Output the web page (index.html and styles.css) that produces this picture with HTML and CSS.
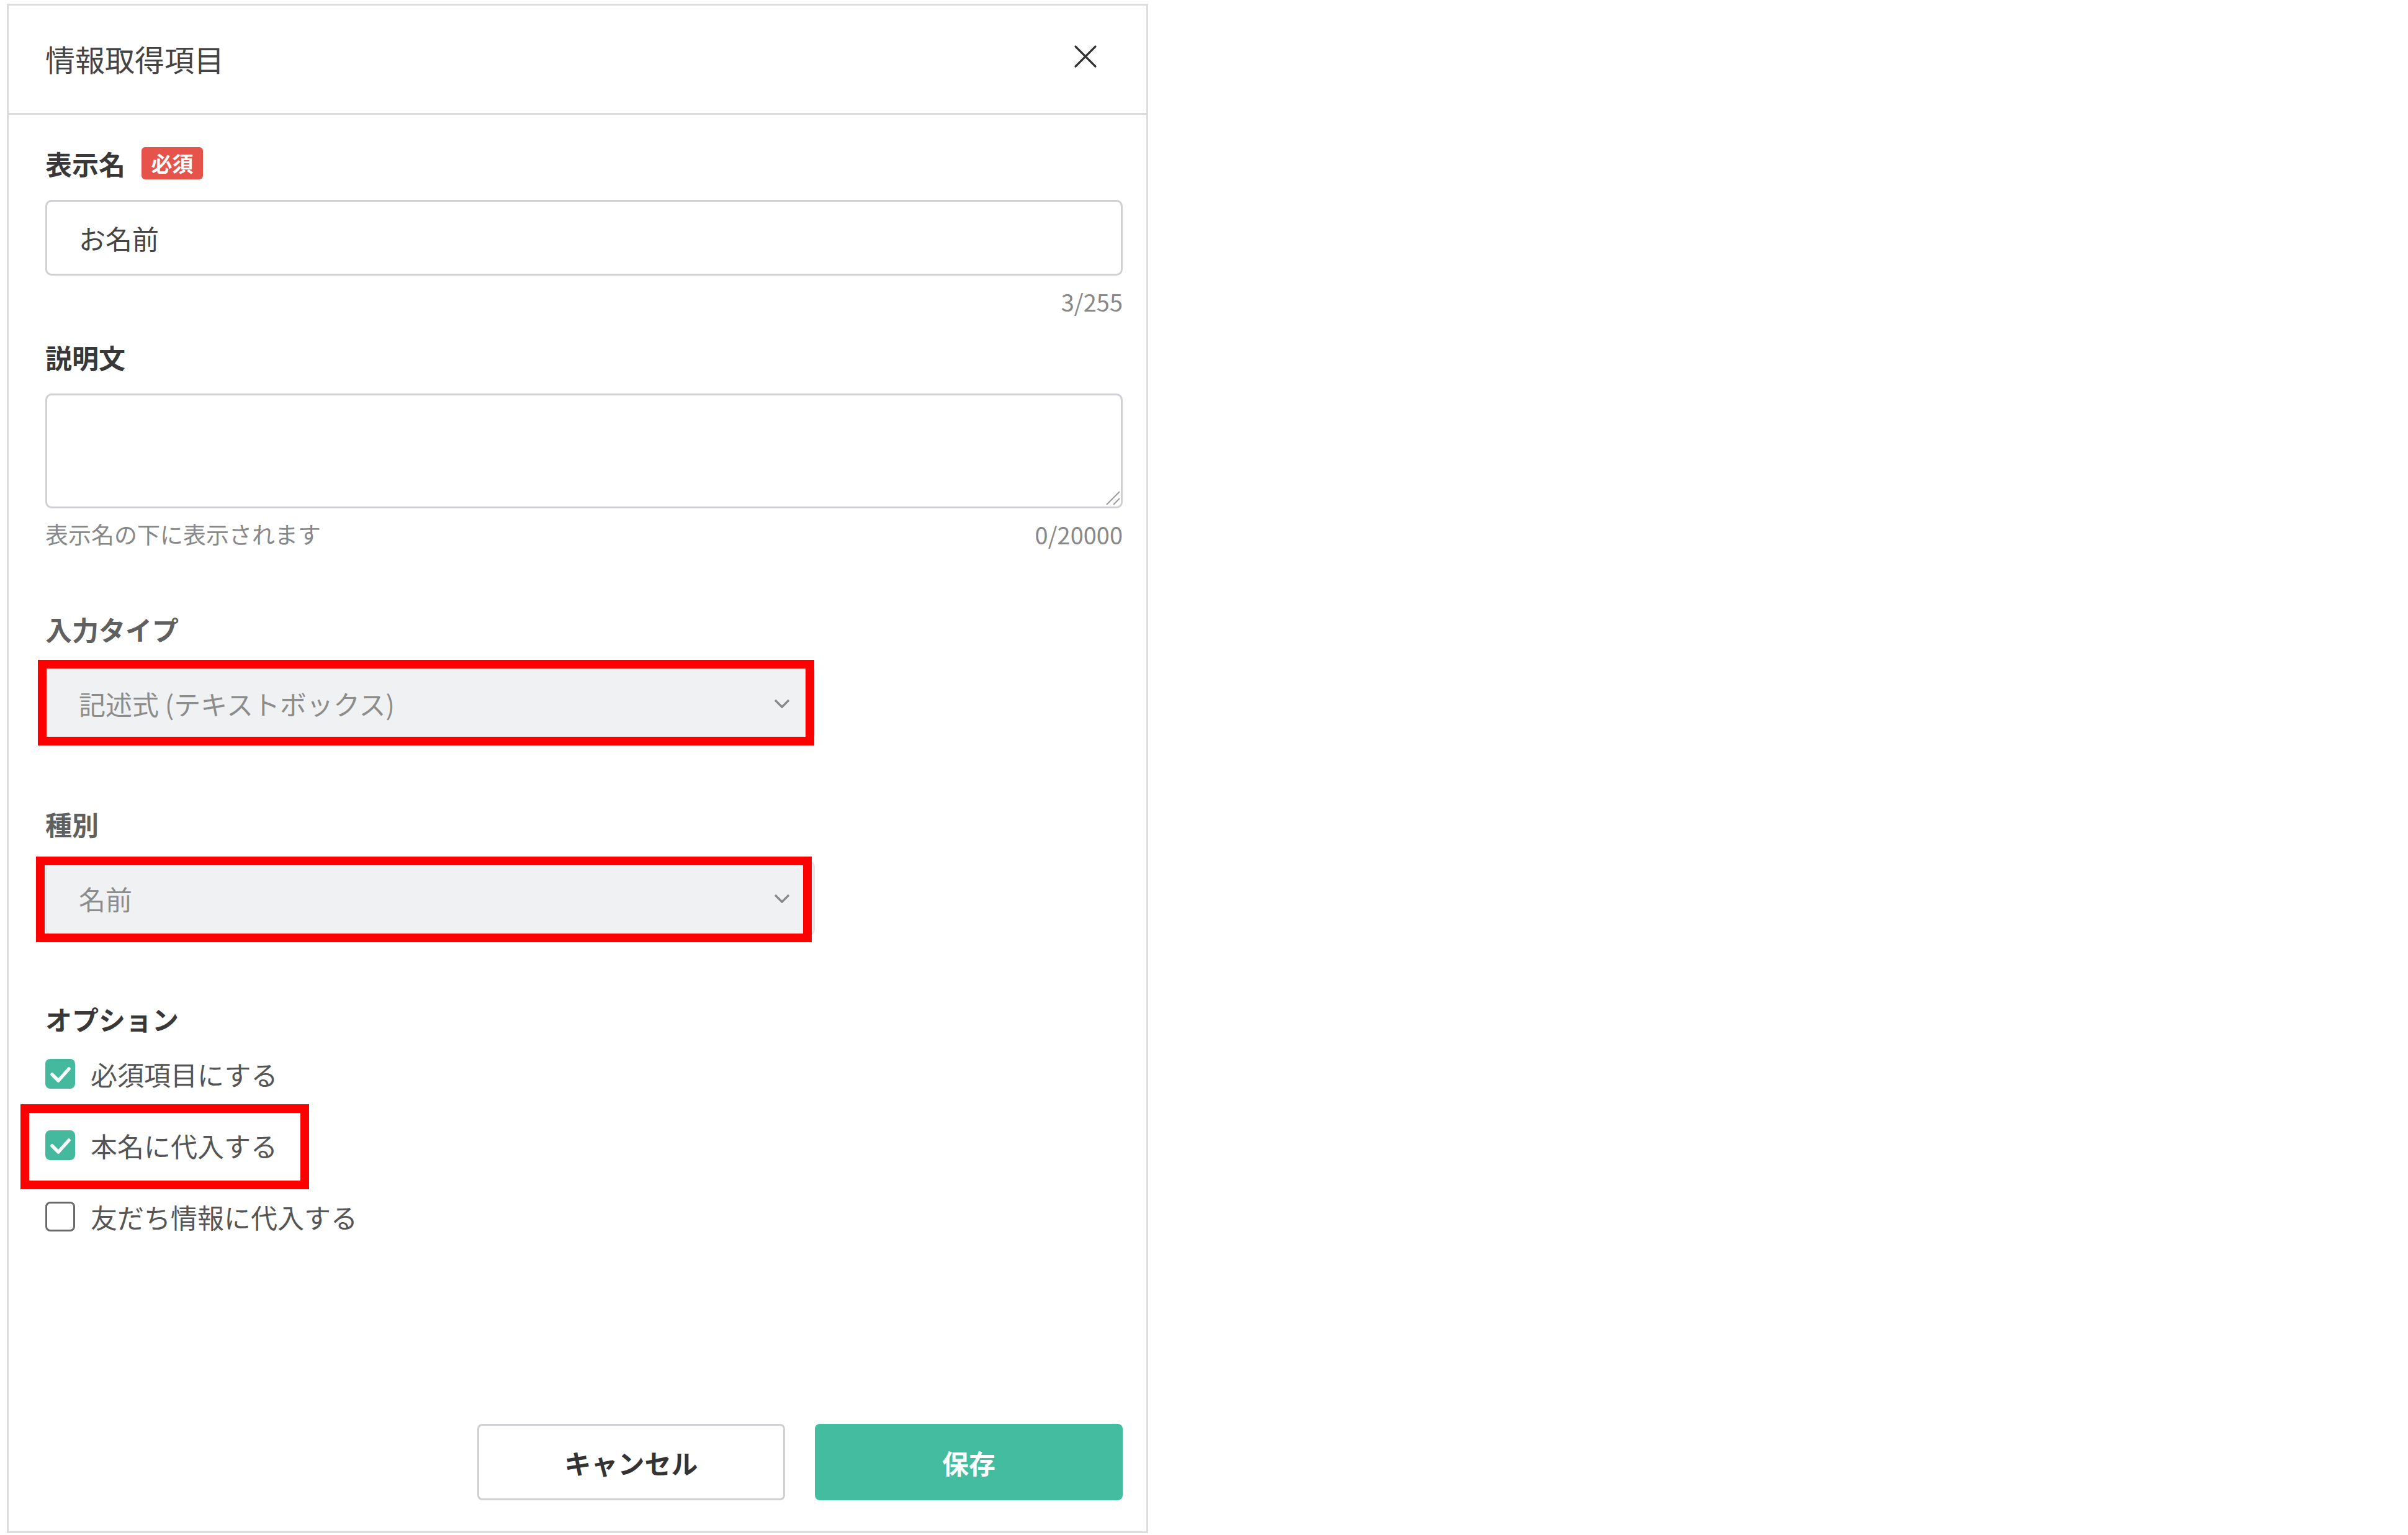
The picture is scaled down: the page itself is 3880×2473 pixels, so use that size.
FILE: index.html
```html
<!DOCTYPE html>
<html lang="ja">
<head>
<meta charset="utf-8">
<title>情報取得項目</title>
<link rel="stylesheet" href="styles.css">
</head>
<body>
<div class="panel">
  <header class="panel-header">
    <h1 class="panel-title">情報取得項目</h1>
    <button class="close-btn" type="button" aria-label="閉じる">
      <svg viewBox="0 0 38 38" width="38" height="38"><path d="M3 3 L35 35 M35 3 L3 35" stroke="#333" stroke-width="3.2" stroke-linecap="round" fill="none"/></svg>
    </button>
  </header>

  <div class="panel-body">
    <section class="field field-first">
      <div class="label-row"><span class="label">表示名</span><span class="badge">必須</span></div>
      <div class="control input">お名前</div>
      <div class="meta-row"><span class="helper"></span><span class="counter">3/255</span></div>
    </section>

    <section class="field field-second">
      <div class="label-row"><span class="label">説明文</span></div>
      <div class="control textarea">
        <svg class="resize-grip" viewBox="0 0 26 26" width="26" height="26"><path d="M3 23 L24 2 M14 23 L24 13" stroke="#9a9a9a" stroke-width="2" fill="none"/></svg>
      </div>
      <div class="meta-row"><span class="helper">表示名の下に表示されます</span><span class="counter">0/20000</span></div>
    </section>

    <section class="field">
      <div class="label-row"><span class="label label-muted">入力タイプ</span></div>
      <div class="control select">
        <span>記述式 (テキストボックス)</span>
        <svg class="chevron" viewBox="0 0 26 15" width="26" height="15"><path d="M2 2 L13 13 L24 2" stroke="#8a8a8a" stroke-width="3.5" fill="none"/></svg>
        <span class="highlight highlight-type"></span>
      </div>
    </section>

    <section class="field">
      <div class="label-row"><span class="label label-muted">種別</span></div>
      <div class="control select">
        <span>名前</span>
        <svg class="chevron" viewBox="0 0 26 15" width="26" height="15"><path d="M2 2 L13 13 L24 2" stroke="#8a8a8a" stroke-width="3.5" fill="none"/></svg>
        <span class="highlight highlight-kind"></span>
      </div>
    </section>

    <section class="field">
      <div class="label-row"><span class="label">オプション</span></div>
      <div class="control check-list">
        <label class="check-row">
          <span class="checkbox checked"><svg viewBox="0 0 48 48" width="48" height="48"><path d="M11 25 L21 35 L38 16" stroke="#fff" stroke-width="5.5" stroke-linecap="round" stroke-linejoin="round" fill="none"/></svg></span>
          <span>必須項目にする</span>
        </label>
        <label class="check-row">
          <span class="checkbox checked"><svg viewBox="0 0 48 48" width="48" height="48"><path d="M11 25 L21 35 L38 16" stroke="#fff" stroke-width="5.5" stroke-linecap="round" stroke-linejoin="round" fill="none"/></svg></span>
          <span>本名に代入する</span>
          <span class="highlight highlight-option"></span>
        </label>
        <label class="check-row">
          <span class="checkbox"></span>
          <span>友だち情報に代入する</span>
        </label>
      </div>
    </section>
  </div>

  <footer class="panel-footer">
    <button class="btn btn-cancel" type="button">キャンセル</button>
    <button class="btn btn-save" type="button">保存</button>
  </footer>
</div>
</body>
</html>
```

FILE: styles.css
```css
* {
  box-sizing: border-box;
}

html,
body {
  margin: 0;
  padding: 0;
  background: #ffffff;
}

body {
  font-family: "Noto Sans CJK JP", "Noto Sans", sans-serif;
  color: #333333;
}

.panel {
  margin: 6px 0 0 11px;
  width: 1839px;
  height: 2464px;
  border: 3px solid #dcdcdc;
  background: #ffffff;
  display: flex;
  flex-direction: column;
}

/* Header */
.panel-header {
  flex: none;
  height: 176px;
  border-bottom: 3px solid #dcdcdc;
  display: flex;
  align-items: center;
  justify-content: space-between;
  padding: 0 79px 0 59px;
}

.panel-title {
  margin: 0 0 3px 0;
  font-size: 48px;
  font-weight: 400;
  line-height: 1;
  color: #444444;
}

.close-btn {
  border: 0;
  background: none;
  padding: 0;
  width: 38px;
  height: 38px;
  margin-bottom: 9px;
  display: flex;
  cursor: pointer;
}

.close-btn svg {
  display: block;
}

/* Body */
.panel-body {
  flex: 1;
  padding: 52px 38px 0 59px;
  display: flex;
  flex-direction: column;
}

.field {
  display: flex;
  flex-direction: column;
  margin-top: 107px;
}

.field-first {
  margin-top: 0;
}

.field-second {
  margin-top: 44px;
}

.label-row {
  height: 52px;
  display: flex;
  align-items: center;
}

.label {
  font-size: 43px;
  font-weight: 700;
  line-height: 1;
  color: #383838;
}

.label-muted {
  color: #606060;
}

.badge {
  margin-left: 26px;
  width: 99px;
  height: 52px;
  border-radius: 6px;
  background: #e5534b;
  color: #ffffff;
  font-size: 34px;
  font-weight: 700;
  line-height: 1;
  display: flex;
  align-items: center;
  justify-content: center;
}

.control {
  margin-top: 33px;
}

.input {
  height: 122px;
  border: 3px solid #cfd0d4;
  border-radius: 10px;
  padding-left: 51px;
  display: flex;
  align-items: center;
  font-size: 43px;
  color: #444444;
}

.textarea {
  position: relative;
  height: 185px;
  border: 3px solid #cfd0d4;
  border-radius: 10px;
}

.resize-grip {
  position: absolute;
  right: 0;
  bottom: 0;
  display: block;
}

.meta-row {
  margin-top: 21px;
  height: 40px;
  display: flex;
  align-items: center;
  justify-content: space-between;
  color: #888888;
}

.helper {
  font-size: 37px;
}

.counter {
  font-size: 38px;
}

.select {
  position: relative;
  width: 1240px;
  height: 122px;
  background: #f0f1f3;
  border: 3px solid #e4e5e8;
  border-radius: 10px;
  padding: 0 37px 0 51px;
  display: flex;
  align-items: center;
  justify-content: space-between;
  font-size: 43px;
  color: #8c8c8c;
}

.chevron {
  display: block;
}

/* Annotation outlines */
.highlight {
  position: absolute;
  border: 14px solid #ff0000;
  pointer-events: none;
}

.highlight-type {
  left: -15px;
  top: -12px;
  width: 1251px;
  height: 138px;
}

.highlight-kind {
  left: -18px;
  top: -9px;
  width: 1250px;
  height: 138px;
}

.highlight-option {
  left: -40px;
  top: -36px;
  width: 465px;
  height: 137px;
}

/* Checkboxes */
.check-list {
  display: flex;
  flex-direction: column;
  gap: 55px;
}

.check-row {
  position: relative;
  width: max-content;
  height: 60px;
  display: flex;
  align-items: center;
  gap: 25px;
  font-size: 43px;
  color: #555555;
}

.checkbox {
  width: 48px;
  height: 48px;
  border-radius: 8px;
  border: 3px solid #6a6a6a;
  background: #ffffff;
  display: block;
  flex: none;
}

.checkbox.checked {
  border: 0;
  background: #45b99d;
}

.checkbox svg {
  display: block;
}

/* Footer */
.panel-footer {
  flex: none;
  display: flex;
  justify-content: flex-end;
  gap: 48px;
  padding: 0 38px 50px 0;
}

.btn {
  width: 496px;
  height: 123px;
  border-radius: 8px;
  font-family: "Noto Sans CJK JP", "Noto Sans", sans-serif;
  font-size: 43px;
  font-weight: 700;
  cursor: pointer;
}

.btn-cancel {
  background: #ffffff;
  border: 3px solid #cfd0d4;
  color: #333333;
}

.btn-save {
  background: #43bc9f;
  border: 0;
  color: #ffffff;
}
```
